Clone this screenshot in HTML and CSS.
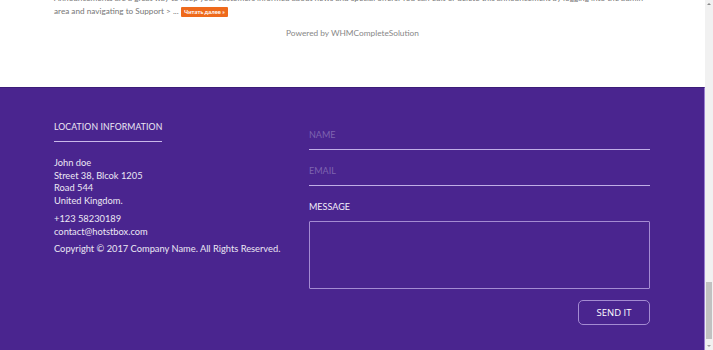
FILE: index.html
```html
<!DOCTYPE html>
<html>
<head>
<meta charset="utf-8">
<link rel="stylesheet" href="styles.css">
</head>
<body>
<div class="window">
  <div class="page">
    <section class="top">
      <p class="announce">Announcements are a great way to keep your customers informed about news and special offers. You can edit or delete this announcement by logging into the admin area and navigating to Support &gt; ... <span class="more">Читать далее »</span></p>
      <p class="powered">Powered by WHMCompleteSolution</p>
    </section>
    <footer class="footer">
      <div class="col-left">
        <h4 class="heading">LOCATION INFORMATION</h4>
        <div class="address">
          <div>John doe</div>
          <div>Street 38, Blcok 1205</div>
          <div>Road 544</div>
          <div>United Kingdom.</div>
        </div>
        <div class="contact">
          <div>+123 58230189</div>
          <div>contact@hotstbox.com</div>
        </div>
        <div class="copy">Copyright © 2017 Company Name. All Rights Reserved.</div>
      </div>
      <form class="col-right">
        <input class="line-input" type="text" placeholder="NAME">
        <input class="line-input" type="text" placeholder="EMAIL">
        <label class="msg-label">MESSAGE</label>
        <textarea class="msg"></textarea>
        <div class="actions"><button type="button" class="send">SEND IT</button></div>
      </form>
    </footer>
  </div>
  <div class="scrollbar">
    <div class="arrow up"></div>
    <div class="track"><div class="thumb"></div></div>
    <div class="arrow down"></div>
  </div>
</div>
</body>
</html>
```
FILE: styles.css
```css
html, body {
  margin: 0;
  padding: 0;
  height: 350px;
  overflow: hidden;
}
body {
  font-family: Lato, "Open Sans", sans-serif;
}
.window {
  display: flex;
  height: 350px;
  width: 713px;
}
.page {
  width: 705px;
  display: flex;
  flex-direction: column;
}
.top {
  height: 87px;
  background: #fff;
  overflow: hidden;
  padding: 0 54px;
  box-sizing: border-box;
}
.announce {
  margin: -8px 0 0;
  font-size: 8.2px;
  line-height: 13px;
  color: #777;
}
.more {
  display: inline-block;
  background: #ee6a1c;
  color: #fff;
  font-size: 5.8px;
  font-weight: bold;
  line-height: 10px;
  padding: 0 3.5px;
  border-radius: 1px;
  vertical-align: 0;
}
.powered {
  margin: 10px 0 0;
  text-align: center;
  font-size: 8.3px;
  color: #888;
}
.footer {
  flex: 1;
  background: #4a258f;
  border-right: 1px solid #9a7fd0;
  border-top: 1px solid #3c1d78;
  display: flex;
  padding: 0 54px 0 54px;
  color: #ece8f4;
}
.col-left {
  width: 255px;
  padding-top: 33px;
  font-size: 9.3px;
}
.heading {
  margin: 0;
  font-weight: normal;
  font-size: 8.7px;
  display: inline-block;
  padding-bottom: 9px;
  border-bottom: 1px solid #c9b8ea;
  letter-spacing: 0.1px;
}
.address {
  margin-top: 15px;
  line-height: 12.7px;
}
.contact {
  margin-top: 5px;
  line-height: 12.7px;
}
.copy {
  margin-top: 5px;
  line-height: 12.7px;
}
.col-right {
  width: 341px;
  display: flex;
  flex-direction: column;
  padding-top: 37px;
  margin: 0;
}
.line-input {
  background: transparent;
  border: none;
  border-bottom: 1px solid #c0aee6;
  outline: none;
  font-family: Lato, sans-serif;
  font-size: 9px;
  color: #fff;
  padding: 0 0 5px;
  height: 25px;
  box-sizing: border-box;
  margin-bottom: 11px;
}
.line-input::placeholder {
  color: #7e64b0;
}
.msg-label {
  font-size: 9px;
  color: #f2eefa;
  margin-top: 4px;
  line-height: 11px;
}
.msg {
  margin-top: 9px;
  height: 68px;
  box-sizing: border-box;
  background: transparent;
  border: 1px solid #a48bd2;
  border-radius: 1px;
  resize: none;
  outline: none;
}
.actions {
  display: flex;
  justify-content: flex-end;
  margin-top: 11px;
}
.send {
  width: 72px;
  height: 25px;
  background: transparent;
  border: 1px solid #a48bd2;
  border-radius: 5px;
  color: #fff;
  font-family: "Open Sans", sans-serif;
  font-size: 9.5px;
  padding: 0;
}
.scrollbar {
  width: 8px;
  background: #f1f1f1;
  display: flex;
  flex-direction: column;
}
.arrow {
  height: 8px;
  display: flex;
  justify-content: center;
  align-items: center;
}
.arrow.up::before {
  content: "";
  border-left: 2px solid transparent;
  border-right: 2px solid transparent;
  border-bottom: 2px solid #8a8a8a;
}
.arrow.down::before {
  content: "";
  border-left: 2px solid transparent;
  border-right: 2px solid transparent;
  border-top: 2px solid #a0a0a0;
}
.track {
  flex: 1;
  display: flex;
  flex-direction: column;
  justify-content: flex-end;
  padding: 0 1px 3px;
}
.thumb {
  height: 57px;
  background: #c1c1c1;
}
```
